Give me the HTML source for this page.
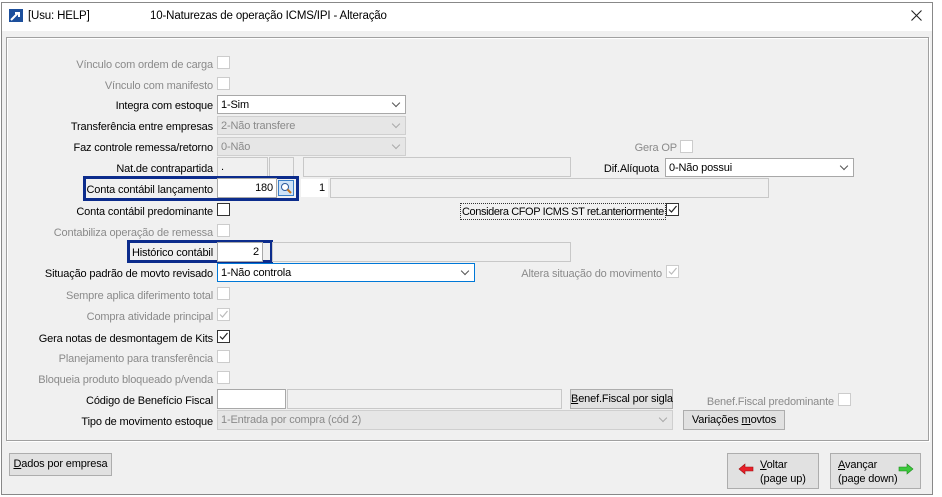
<!DOCTYPE html>
<html><head><meta charset="utf-8">
<style>
*{box-sizing:border-box;margin:0;padding:0}
body{width:942px;height:497px;background:#fff;font-family:"Liberation Sans",Tahoma,sans-serif;font-size:11px;letter-spacing:-0.15px;color:#000;position:relative;overflow:hidden}
.a{position:absolute}
.win{left:1px;top:2px;width:932px;height:493px;background:#f0f0f0;border:1px solid #888}
.title{left:2px;top:3px;width:930px;height:28px;background:#fff}
.grp{left:6px;top:37px;width:923px;height:404px;border:1px solid #a0a0a0;box-shadow:inset 1px 1px 0 #fff,1px 1px 0 #fff}
.l{position:absolute;text-align:right;white-space:nowrap;line-height:14px;margin-top:1px}
.g{color:#8a8a8a}
.cb{position:absolute;width:13px;height:13px;background:#fff;border:1px solid #333}
.cb.d{border-color:#ccc}
.in{position:absolute;background:#fff;border:1px solid #a8a8a8;height:20px;line-height:19px;padding:0 3px;white-space:nowrap;overflow:hidden}
.in.d{background:#f0f0f0;border-color:#c8c8c8}
.sel{position:absolute;height:19px;background:#fff;border:1px solid #a8a8a8;line-height:18px;padding:0 3px;white-space:nowrap}
.sel.d{background:#e6e6e6;border-color:#cfcfcf;color:#8a8a8a}
.sel:after{content:"";position:absolute;right:6px;top:4px;width:5px;height:5px;border-right:1px solid #555;border-bottom:1px solid #555;transform:rotate(45deg)}
.sel.d:after{border-color:#aaa}
.btn{position:absolute;background:#e1e1e1;border:1px solid #adadad;text-align:center;line-height:18px;white-space:nowrap}
.blue{position:absolute;border:3px solid #0c2c8c}
</style></head><body>
<div class="a win"></div>
<div class="a title"></div>
<svg class="a" style="left:9px;top:9px" width="14" height="13"><rect width="14" height="13" fill="#1c4f9c"/><path d="M2 11 L9 4 M6 4 H10 V8" stroke="#fff" stroke-width="2" fill="none"/></svg>
<div class="a" style="left:28px;top:10px;font-size:11.5px">[Usu: HELP]</div>
<div class="a" style="left:150px;top:10px;font-size:11.5px">10-Naturezas de operação ICMS/IPI - Alteração</div>
<svg class="a" style="left:911px;top:10px" width="11" height="11"><path d="M0.5 0.5 L10.5 10.5 M10.5 0.5 L0.5 10.5" stroke="#222" stroke-width="1.1"/></svg>
<div class="a grp"></div>

<div class="l g" style="right:729px;top:57px">Vínculo com ordem de carga</div><div class="cb d" style="left:217px;top:56px"></div>
<div class="l g" style="right:729px;top:78px">Vínculo com manifesto</div><div class="cb d" style="left:217px;top:77px"></div>
<div class="l" style="right:729px;top:98px">Integra com estoque</div><div class="sel" style="left:217px;top:95px;width:189px">1-Sim</div>
<div class="l" style="right:729px;top:119px">Transferência entre empresas</div><div class="sel d" style="left:217px;top:116px;width:189px">2-Não transfere</div>
<div class="l" style="right:729px;top:140px">Faz controle remessa/retorno</div><div class="sel d" style="left:217px;top:137px;width:189px">0-Não</div>
<div class="l" style="right:729px;top:161px">Nat.de contrapartida</div>
<div class="in d" style="left:217px;top:157px;width:51px">.</div>
<div class="in d" style="left:269px;top:157px;width:25px"></div>
<div class="in d" style="left:303px;top:157px;width:268px"></div>
<div class="l g" style="right:265px;top:140px">Gera OP</div><div class="cb d" style="left:680px;top:140px"></div>
<div class="l" style="right:283px;top:161px">Dif.Alíquota</div><div class="sel" style="left:665px;top:158px;width:189px">0-Não possui</div>

<div class="blue" style="left:83px;top:176px;width:216px;height:25px"></div>
<div class="l" style="right:729px;top:182px">Conta contábil lançamento</div>
<div class="in" style="left:217px;top:178px;width:60px;text-align:right">180</div>
<svg class="a" style="left:278px;top:180px" width="16" height="16"><rect x=".5" y=".5" width="15" height="15" fill="#cfe3f7" stroke="#3a7fc8"/><circle cx="7" cy="7" r="3.5" fill="#fff" stroke="#2a5a9c"/><path d="M9.5 9.5 L13 13" stroke="#c8741a" stroke-width="2"/></svg>
<div class="in" style="left:300px;top:178px;width:29px;text-align:right;border-color:#f0f0f0">1</div>
<div class="in d" style="left:330px;top:178px;width:439px"></div>

<div class="l" style="right:729px;top:204px">Conta contábil predominante</div><div class="cb" style="left:217px;top:203px"></div>
<div class="a" style="left:460px;top:203px;border:1px dotted #333;padding:1px 1px 0;line-height:14px;letter-spacing:-0.4px">Considera CFOP ICMS ST ret.anteriormente</div>
<div class="cb" style="left:666px;top:203px"><svg width="11" height="11" style="position:absolute;left:0;top:0"><path d="M2 5.5 L4.5 8 L9.5 2" stroke="#222" stroke-width="1.2" fill="none"/></svg></div>
<div class="l g" style="right:729px;top:225px">Contabiliza operação de remessa</div><div class="cb d" style="left:217px;top:224px"></div>

<div class="blue" style="left:127px;top:240px;width:146px;height:23px"></div>
<div class="l" style="right:729px;top:245px">Histórico contábil</div>
<div class="in" style="left:217px;top:242px;width:46px;text-align:right">2</div>
<div class="in d" style="left:272px;top:242px;width:299px"></div>

<div class="l" style="right:729px;top:266px">Situação padrão de movto revisado</div>
<div class="sel" style="left:217px;top:263px;width:258px;border-color:#0078d7">1-Não controla</div>
<div class="l g" style="right:280px;top:266px">Altera situação do movimento</div>
<div class="cb d" style="left:666px;top:265px"><svg width="11" height="11" style="position:absolute"><path d="M2 5.5 L4.5 8 L9.5 2" stroke="#bbb" stroke-width="1.2" fill="none"/></svg></div>

<div class="l g" style="right:729px;top:288px">Sempre aplica diferimento total</div><div class="cb d" style="left:217px;top:287px"></div>
<div class="l g" style="right:729px;top:309px">Compra atividade principal</div><div class="cb d" style="left:217px;top:308px"><svg width="11" height="11" style="position:absolute"><path d="M2 5.5 L4.5 8 L9.5 2" stroke="#bbb" stroke-width="1.2" fill="none"/></svg></div>
<div class="l" style="right:729px;top:331px">Gera notas de desmontagem de Kits</div><div class="cb" style="left:217px;top:330px"><svg width="11" height="11" style="position:absolute"><path d="M2 5.5 L4.5 8 L9.5 2" stroke="#222" stroke-width="1.2" fill="none"/></svg></div>
<div class="l g" style="right:729px;top:351px">Planejamento para transferência</div><div class="cb d" style="left:217px;top:350px"></div>
<div class="l g" style="right:729px;top:372px">Bloqueia produto bloqueado p/venda</div><div class="cb d" style="left:217px;top:371px"></div>

<div class="l" style="right:729px;top:393px">Código de Benefício Fiscal</div>
<div class="in" style="left:217px;top:389px;width:69px"></div>
<div class="in d" style="left:287px;top:389px;width:275px"></div>
<div class="btn" style="left:570px;top:389px;width:103px;height:20px"><u>B</u>enef.Fiscal por sigla</div>
<div class="l g" style="right:108px;top:394px">Benef.Fiscal predominante</div><div class="cb d" style="left:838px;top:393px"></div>
<div class="l" style="right:729px;top:414px">Tipo de movimento estoque</div>
<div class="sel d" style="left:217px;top:410px;width:456px;height:20px">1-Entrada por compra (cód 2)</div>
<div class="btn" style="left:683px;top:410px;width:102px;height:20px">Variações <u>m</u>ovtos</div>

<div class="btn" style="left:9px;top:453px;width:103px;height:23px;line-height:21px"><u>D</u>ados por empresa</div>
<div class="btn" style="left:727px;top:453px;width:92px;height:36px;line-height:14px;text-align:left;padding:4px 0 0 32px"><u>V</u>oltar<br>(page up)</div>
<svg class="a" style="left:738px;top:463px" width="16" height="12"><path d="M1 6 L7 1 V4 H15 V8 H7 V11 Z" fill="#e8202a" stroke="#a01010" stroke-width=".6"/></svg>
<div class="btn" style="left:830px;top:453px;width:91px;height:36px;line-height:14px;text-align:left;padding:4px 0 0 7px"><u>A</u>vançar<br>(page down)</div>
<svg class="a" style="left:898px;top:463px" width="16" height="12"><path d="M15 6 L9 1 V4 H1 V8 H9 V11 Z" fill="#3cc83c" stroke="#1a8a1a" stroke-width=".6"/></svg>
</body></html>
